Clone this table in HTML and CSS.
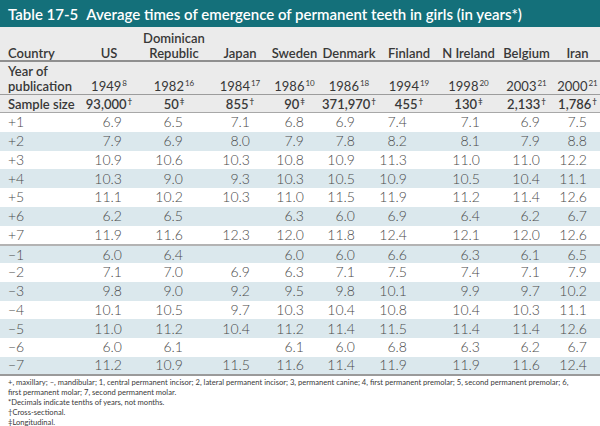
FILE: index.html
```html
<!DOCTYPE html>
<html lang="en">
<head>
<meta charset="utf-8">
<title>Table 17-5</title>
<link rel="stylesheet" href="styles.css">
</head>
<body>
<div class="page">
  <div class="title"><span class="tnum">Table 17-5</span>Average times of emergence of permanent teeth in girls (in years*)</div>
  <div class="table">
    <div class="row head">
      <div class="c first">Country</div>
      <div class="c">US</div>
      <div class="c">Dominican<br>Republic</div>
      <div class="c">Japan</div>
      <div class="c">Sweden</div>
      <div class="c">Denmark</div>
      <div class="c">Finland</div>
      <div class="c">N Ireland</div>
      <div class="c">Belgium</div>
      <div class="c">Iran</div>
    </div>
    <div class="row year">
      <div class="c first">Year of<br>publication</div>
      <div class="c">1949<sup>8</sup></div>
      <div class="c">1982<sup>16</sup></div>
      <div class="c">1984<sup>17</sup></div>
      <div class="c">1986<sup>10</sup></div>
      <div class="c">1986<sup>18</sup></div>
      <div class="c">1994<sup>19</sup></div>
      <div class="c">1998<sup>20</sup></div>
      <div class="c">2003<sup>21</sup></div>
      <div class="c">2000<sup>21</sup></div>
    </div>
    <div class="row sample">
      <div class="c first">Sample size</div>
      <div class="c">93,000<sup>†</sup></div>
      <div class="c">50<sup>‡</sup></div>
      <div class="c">855<sup>†</sup></div>
      <div class="c">90<sup>‡</sup></div>
      <div class="c">371,970<sup>†</sup></div>
      <div class="c">455<sup>†</sup></div>
      <div class="c">130<sup>‡</sup></div>
      <div class="c">2,133<sup>†</sup></div>
      <div class="c">1,786<sup>†</sup></div>
    </div>
    <div class="body">
      <div class="row data"><div class="c first">+1</div><div class="c">6.9</div><div class="c">6.5</div><div class="c">7.1</div><div class="c">6.8</div><div class="c">6.9</div><div class="c">7.4</div><div class="c">7.1</div><div class="c">6.9</div><div class="c">7.5</div></div>
      <div class="row data"><div class="c first">+2</div><div class="c">7.9</div><div class="c">6.9</div><div class="c">8.0</div><div class="c">7.9</div><div class="c">7.8</div><div class="c">8.2</div><div class="c">8.1</div><div class="c">7.9</div><div class="c">8.8</div></div>
      <div class="row data"><div class="c first">+3</div><div class="c">10.9</div><div class="c">10.6</div><div class="c">10.3</div><div class="c">10.8</div><div class="c">10.9</div><div class="c">11.3</div><div class="c">11.0</div><div class="c">11.0</div><div class="c">12.2</div></div>
      <div class="row data"><div class="c first">+4</div><div class="c">10.3</div><div class="c">9.0</div><div class="c">9.3</div><div class="c">10.3</div><div class="c">10.5</div><div class="c">10.9</div><div class="c">10.5</div><div class="c">10.4</div><div class="c">11.1</div></div>
      <div class="row data"><div class="c first">+5</div><div class="c">11.1</div><div class="c">10.2</div><div class="c">10.3</div><div class="c">11.0</div><div class="c">11.5</div><div class="c">11.9</div><div class="c">11.2</div><div class="c">11.4</div><div class="c">12.6</div></div>
      <div class="row data"><div class="c first">+6</div><div class="c">6.2</div><div class="c">6.5</div><div class="c"></div><div class="c">6.3</div><div class="c">6.0</div><div class="c">6.9</div><div class="c">6.4</div><div class="c">6.2</div><div class="c">6.7</div></div>
      <div class="row data"><div class="c first">+7</div><div class="c">11.9</div><div class="c">11.6</div><div class="c">12.3</div><div class="c">12.0</div><div class="c">11.8</div><div class="c">12.4</div><div class="c">12.1</div><div class="c">12.0</div><div class="c">12.6</div></div>
      <div class="row data split"><div class="c first">−1</div><div class="c">6.0</div><div class="c">6.4</div><div class="c"></div><div class="c">6.0</div><div class="c">6.0</div><div class="c">6.6</div><div class="c">6.3</div><div class="c">6.1</div><div class="c">6.5</div></div>
      <div class="row data"><div class="c first">−2</div><div class="c">7.1</div><div class="c">7.0</div><div class="c">6.9</div><div class="c">6.3</div><div class="c">7.1</div><div class="c">7.5</div><div class="c">7.4</div><div class="c">7.1</div><div class="c">7.9</div></div>
      <div class="row data"><div class="c first">−3</div><div class="c">9.8</div><div class="c">9.0</div><div class="c">9.2</div><div class="c">9.5</div><div class="c">9.8</div><div class="c">10.1</div><div class="c">9.9</div><div class="c">9.7</div><div class="c">10.2</div></div>
      <div class="row data"><div class="c first">−4</div><div class="c">10.1</div><div class="c">10.5</div><div class="c">9.7</div><div class="c">10.3</div><div class="c">10.4</div><div class="c">10.8</div><div class="c">10.4</div><div class="c">10.3</div><div class="c">11.1</div></div>
      <div class="row data"><div class="c first">−5</div><div class="c">11.0</div><div class="c">11.2</div><div class="c">10.4</div><div class="c">11.2</div><div class="c">11.4</div><div class="c">11.5</div><div class="c">11.4</div><div class="c">11.4</div><div class="c">12.6</div></div>
      <div class="row data"><div class="c first">−6</div><div class="c">6.0</div><div class="c">6.1</div><div class="c"></div><div class="c">6.1</div><div class="c">6.0</div><div class="c">6.8</div><div class="c">6.3</div><div class="c">6.2</div><div class="c">6.7</div></div>
      <div class="row data"><div class="c first">−7</div><div class="c">11.2</div><div class="c">10.9</div><div class="c">11.5</div><div class="c">11.6</div><div class="c">11.4</div><div class="c">11.9</div><div class="c">11.9</div><div class="c">11.6</div><div class="c">12.4</div></div>
    </div>
  </div>
  <div class="notes">
    <p>+, maxillary; –, mandibular; 1, central permanent incisor; 2, lateral permanent incisor; 3, permanent canine; 4, first permanent premolar; 5, second permanent premolar; 6,<br>first permanent molar; 7, second permanent molar.</p>
    <p>*Decimals indicate tenths of years, not months.</p>
    <p>†Cross-sectional.</p>
    <p>‡Longitudinal.</p>
  </div>
</div>
</body>
</html>
```

FILE: styles.css
```css
* { box-sizing: border-box; }
html, body { margin: 0; padding: 0; background: #ffffff; }
.page {
  width: 600px;
  font-family: Lato, "Open Sans", sans-serif;
  color: #333333;
}
.title {
  height: 27px;
  background: #14707a;
  color: #ffffff;
  font-weight: 600;
  font-size: 15px;
  display: flex;
  align-items: center;
  padding-left: 8px;
  white-space: nowrap;
}
.tnum { margin-right: 8px; }
.row {
  display: grid;
  grid-template-columns: 80px 58px 72px 60px 49px 60px 60px 59px 57px 45px;
}
.c { text-align: center; white-space: nowrap; }
.c.first { text-align: left; padding-left: 8px; }
sup {
  font-size: 8px;
  line-height: 0;
  vertical-align: 5px;
  margin-left: 1px;
}
.head, .year, .sample {
  background: #ebebeb;
  font-weight: 600;
  font-size: 13px;
  color: #383838;
}
.head {
  height: 35px;
  align-items: end;
  line-height: 15px;
  border-bottom: 2px solid #8f8f8f;
}
.head .c { margin-bottom: -1px; }
.year {
  height: 33px;
  align-items: end;
  line-height: 15px;
  border-bottom: 1px solid #9c9c9c;
}
.year .c:not(.first) { font-weight: 400; }
.sample {
  height: 18px;
  align-items: center;
  line-height: 15px;
  padding-top: 1px;
  border-bottom: 1px solid #a8a8a8;
}
.data {
  height: 18.75px;
  align-items: center;
  font-weight: 300;
  font-size: 14px;
  line-height: 16px;
  color: #4a4a4a;
}
.data:nth-child(even) { background: #dbe8ed; }
.data.split { border-top: 2px solid #b3b3b3; }
.data:last-child { border-bottom: 2px solid #9a9a9a; }
.data .c:not(.first) { text-align: right; }
.data .c:nth-child(2) { padding-right: 16px; }
.data .c:nth-child(3) { padding-right: 27px; }
.data .c:nth-child(4) { padding-right: 20px; }
.data .c:nth-child(5) { padding-right: 15px; }
.data .c:nth-child(6) { padding-right: 24px; }
.data .c:nth-child(7) { padding-right: 32px; }
.data .c:nth-child(8) { padding-right: 18px; }
.data .c:nth-child(9) { padding-right: 15px; }
.data .c:nth-child(10) { padding-right: 13px; }
.notes {
  padding: 1px 8px 0;
  font-size: 7.6px;
  line-height: 10px;
  color: #3a3a3a;
}
.notes p { margin: 0; white-space: nowrap; }
```
